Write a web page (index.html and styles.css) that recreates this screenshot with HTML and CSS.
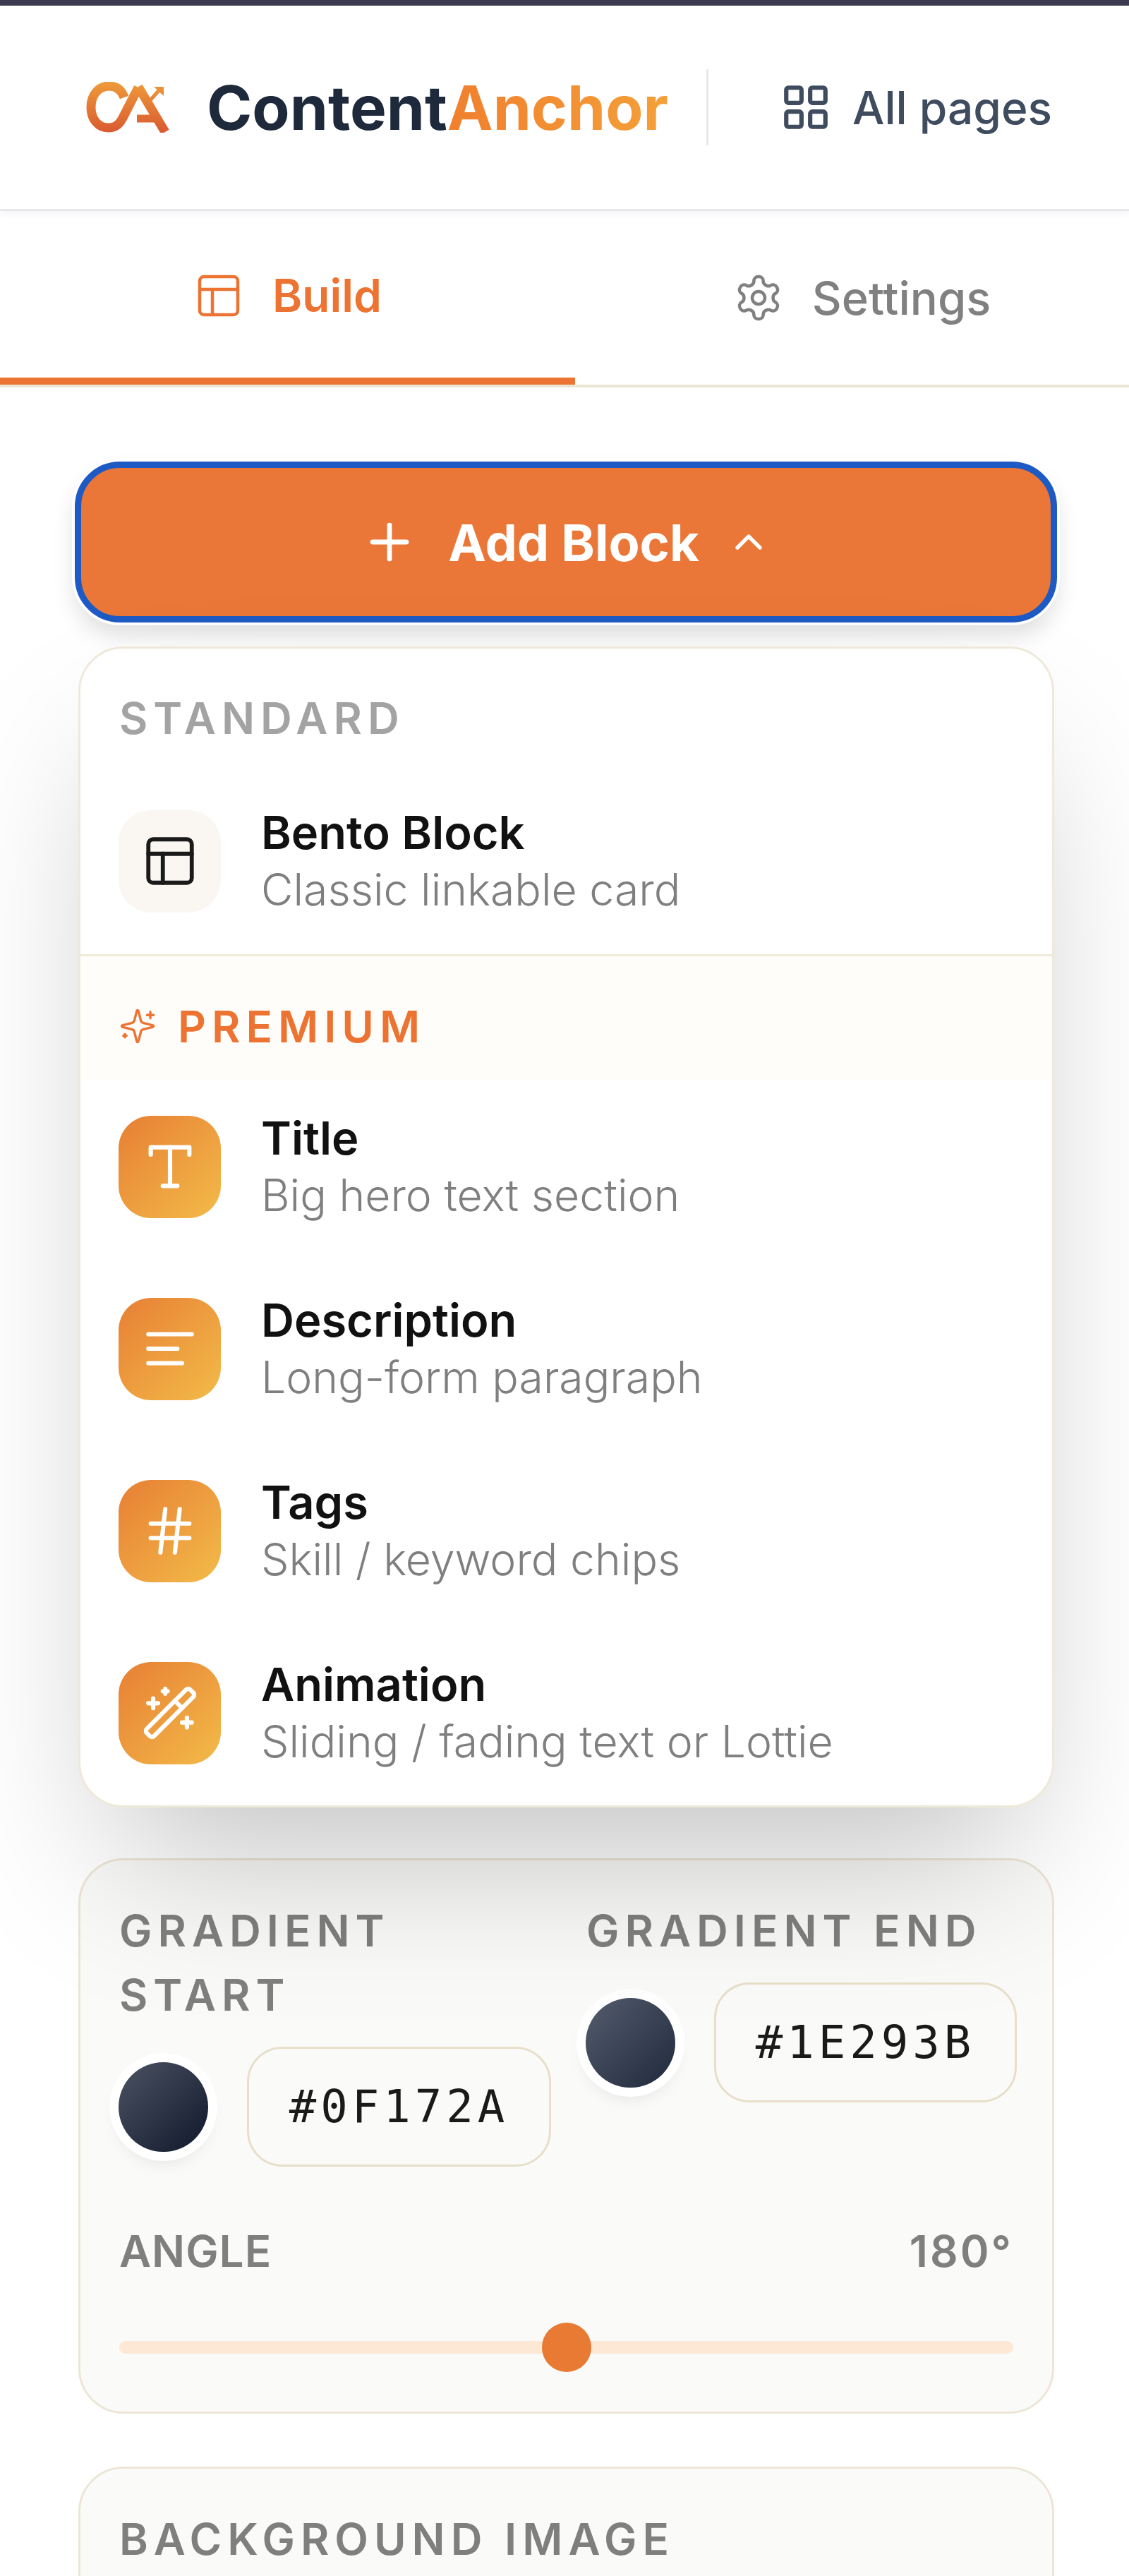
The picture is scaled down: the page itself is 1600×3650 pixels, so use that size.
FILE: index.html

```html
<!DOCTYPE html>
<html lang="en">
<head>
  <meta charset="UTF-8">
  <title>ContentAnchor - Build</title>
  <link rel="stylesheet" href="styles.css">
</head>
<body>
  <div class="topbar"></div>

  <header class="header">
    <svg class="logo" viewBox="0 0 120 72" fill="none">
      <defs>
        <linearGradient id="logoGrad" gradientUnits="userSpaceOnUse" x1="0" y1="0" x2="0" y2="72">
          <stop offset="0" stop-color="#ee9a3a"/>
          <stop offset="1" stop-color="#d95a30"/>
        </linearGradient>
      </defs>
      <path d="M54 22C50 11 43 6 33 6C17 6 7 19 7 36C7 53 17 65 32 65C44 65 49 57 53 49L74 8" stroke="url(#logoGrad)" stroke-width="13"/>
      <path d="M74 7L112 71" stroke="url(#logoGrad)" stroke-width="13"/>
      <path d="M72 52H104" stroke="url(#logoGrad)" stroke-width="11"/>
      <path d="M90 27L106 9" stroke="url(#logoGrad)" stroke-width="5"/>
      <path d="M96 7H110V20Z" fill="url(#logoGrad)"/>
    </svg>
    <div class="brand"><span class="brand-dark">Content</span><span class="brand-light">Anchor</span></div>
    <div class="header-divider"></div>
    <a class="all-pages">
      <svg class="icon all-pages-icon" viewBox="0 0 24 24">
        <rect x="3" y="3" width="7" height="7" rx="1"/><rect x="14" y="3" width="7" height="7" rx="1"/>
        <rect x="14" y="14" width="7" height="7" rx="1"/><rect x="3" y="14" width="7" height="7" rx="1"/>
      </svg>
      All pages
    </a>
  </header>

  <nav class="tabs">
    <a class="tab tab-active">
      <svg class="icon tab-icon" viewBox="0 0 24 24"><rect x="3" y="3" width="18" height="18" rx="2"/><path d="M3 9h18"/><path d="M9 21V9"/></svg>
      Build
    </a>
    <a class="tab tab-settings">
      <svg class="icon tab-icon" viewBox="0 0 24 24"><path d="M12.22 2h-.44a2 2 0 0 0-2 2v.18a2 2 0 0 1-1 1.73l-.43.25a2 2 0 0 1-2 0l-.15-.08a2 2 0 0 0-2.73.73l-.22.38a2 2 0 0 0 .73 2.73l.15.1a2 2 0 0 1 1 1.72v.51a2 2 0 0 1-1 1.74l-.15.09a2 2 0 0 0-.73 2.73l.22.38a2 2 0 0 0 2.73.73l.15-.08a2 2 0 0 1 2 0l.43.25a2 2 0 0 1 1 1.73V20a2 2 0 0 0 2 2h.44a2 2 0 0 0 2-2v-.18a2 2 0 0 1 1-1.73l.43-.25a2 2 0 0 1 2 0l.15.08a2 2 0 0 0 2.73-.73l.22-.39a2 2 0 0 0-.73-2.73l-.15-.08a2 2 0 0 1-1-1.74v-.5a2 2 0 0 1 1-1.74l.15-.09a2 2 0 0 0 .73-2.73l-.22-.38a2 2 0 0 0-2.73-.73l-.15.08a2 2 0 0 1-2 0l-.43-.25a2 2 0 0 1-1-1.73V4a2 2 0 0 0-2-2z"/><circle cx="12" cy="12" r="3"/></svg>
      Settings
    </a>
  </nav>

  <main class="content">
    <button class="add-block">
      <svg class="icon add-icon" viewBox="0 0 24 24"><path d="M5 12h14"/><path d="M12 5v14"/></svg>
      <span>Add Block</span>
      <svg class="icon chevron-icon" viewBox="0 0 24 24"><path d="m18 15-6-6-6 6"/></svg>
    </button>

    <div class="menu">
      <div class="menu-standard">
        <div class="menu-label">STANDARD</div>
        <div class="menu-row">
          <div class="row-icon row-icon-plain">
            <svg class="icon" viewBox="0 0 24 24"><rect x="3" y="3" width="18" height="18" rx="2"/><path d="M3 9h18"/><path d="M9 21V9"/></svg>
          </div>
          <div>
            <div class="row-title">Bento Block</div>
            <div class="row-sub">Classic linkable card</div>
          </div>
        </div>
      </div>

      <div class="menu-premium">
        <svg class="icon sparkle-icon" viewBox="0 0 24 24"><path d="M9.937 15.5A2 2 0 0 0 8.5 14.063l-6.135-1.582a.5.5 0 0 1 0-.962L8.5 9.936A2 2 0 0 0 9.937 8.5l1.582-6.135a.5.5 0 0 1 .963 0L14.063 8.5A2 2 0 0 0 15.5 9.937l6.135 1.581a.5.5 0 0 1 0 .964L15.5 14.063a2 2 0 0 0-1.437 1.437l-1.582 6.135a.5.5 0 0 1-.963 0z"/><path d="M20 3v4"/><path d="M22 5h-4"/><path d="M4 17v2"/><path d="M5 18H3"/></svg>
        <span>PREMIUM</span>
      </div>

      <div class="menu-list">
        <div class="menu-row">
          <div class="row-icon row-icon-premium">
            <svg class="icon" viewBox="0 0 24 24"><path d="M4 7V4h16v3"/><path d="M9 20h6"/><path d="M12 4v16"/></svg>
          </div>
          <div>
            <div class="row-title">Title</div>
            <div class="row-sub">Big hero text section</div>
          </div>
        </div>
        <div class="menu-row">
          <div class="row-icon row-icon-premium">
            <svg class="icon" viewBox="0 0 24 24"><path d="M21 6H3"/><path d="M15 12H3"/><path d="M17 18H3"/></svg>
          </div>
          <div>
            <div class="row-title">Description</div>
            <div class="row-sub">Long-form paragraph</div>
          </div>
        </div>
        <div class="menu-row">
          <div class="row-icon row-icon-premium">
            <svg class="icon" viewBox="0 0 24 24"><path d="M4 9h16"/><path d="M4 15h16"/><path d="M10 3 8 21"/><path d="M16 3l-2 18"/></svg>
          </div>
          <div>
            <div class="row-title">Tags</div>
            <div class="row-sub">Skill / keyword chips</div>
          </div>
        </div>
        <div class="menu-row">
          <div class="row-icon row-icon-premium">
            <svg class="icon" viewBox="0 0 24 24"><path d="m21.64 3.64-1.28-1.28a1.21 1.21 0 0 0-1.72 0L2.36 18.64a1.21 1.21 0 0 0 0 1.72l1.28 1.28a1.2 1.2 0 0 0 1.72 0L21.64 5.36a1.2 1.2 0 0 0 0-1.72"/><path d="m14 7 3 3"/><path d="M5 6v4"/><path d="M19 14v4"/><path d="M10 2v2"/><path d="M7 8H3"/><path d="M21 16h-4"/><path d="M11 3H9"/></svg>
          </div>
          <div>
            <div class="row-title">Animation</div>
            <div class="row-sub">Sliding / fading text or Lottie</div>
          </div>
        </div>
      </div>
    </div>

    <section class="card">
      <div class="color-grid">
        <div>
          <div class="field-label">GRADIENT<br>START</div>
          <div class="color-row">
            <div class="swatch swatch-start"></div>
            <div class="hex-input">#0F172A</div>
          </div>
        </div>
        <div>
          <div class="field-label">GRADIENT END</div>
          <div class="color-row">
            <div class="swatch swatch-end"></div>
            <div class="hex-input">#1E293B</div>
          </div>
        </div>
      </div>
      <div class="angle-row">
        <div class="field-label angle-label">ANGLE</div>
        <div class="field-label angle-value">180°</div>
      </div>
      <div class="slider">
        <div class="slider-thumb"></div>
      </div>
    </section>

    <section class="card card-last">
      <div class="field-label">BACKGROUND IMAGE</div>
    </section>
  </main>
</body>
</html>
```

FILE: styles.css

```css
body {
  margin: 0;
  width: 1600px;
  height: 3650px;
  overflow: hidden;
  background: #fff;
  color: #111;
  font-family: Inter, "Liberation Sans", sans-serif;
}

.icon {
  display: block;
  width: 82px;
  height: 82px;
  fill: none;
  stroke: currentColor;
  stroke-width: 1.5;
  stroke-linecap: round;
  stroke-linejoin: round;
}

/* header */
.topbar {
  height: 8px;
  background: #3c3a4e;
}
.header {
  height: 291px;
  box-sizing: border-box;
  display: flex;
  align-items: center;
  padding-left: 122px;
  border-bottom: 3px solid #e7e8ec;
  box-shadow: 0 4px 10px rgba(0, 0, 0, 0.05);
  position: relative;
}
.logo {
  width: 120px;
  height: 72px;
  margin-right: 51px;
}
.brand {
  font-size: 87px;
  font-weight: 700;
}
.brand-dark {
  color: #1e293b;
}
.brand-light {
  background: linear-gradient(90deg, #f07f2e, #f4a038);
  -webkit-background-clip: text;
  background-clip: text;
  color: transparent;
}
.header-divider {
  width: 3px;
  height: 108px;
  margin-left: 54px;
  background: #e5e7eb;
}
.all-pages {
  display: flex;
  align-items: center;
  gap: 29px;
  margin-left: 101px;
  color: #3f4b5e;
  font-size: 64px;
  font-weight: 500;
}
.all-pages-icon {
  width: 74px;
  height: 74px;
  stroke-width: 2;
}

/* tabs */
.tabs {
  height: 250px;
  box-sizing: border-box;
  display: flex;
  border-bottom: 4px solid #ebe5d6;
}
.tab {
  display: flex;
  align-items: center;
  justify-content: center;
  gap: 46px;
  font-size: 65px;
  font-weight: 500;
  color: #808080;
}
.tab-active {
  width: 815px;
  height: 246px;
  box-sizing: border-box;
  padding-top: 3px;
  border-bottom: 10px solid #ec7331;
  color: #ec7331;
  font-size: 64px;
  font-weight: 600;
}
.tab-settings {
  flex: 1;
  padding-left: 28px;
}
.tab-icon {
  width: 72px;
  height: 72px;
  margin-right: -6px;
}

/* add block */
.content {
  padding: 105px 107px 0;
}
.add-block {
  display: flex;
  align-items: center;
  justify-content: center;
  width: 1392px;
  height: 228px;
  margin-left: -1px;
  border: 9px solid #1d5ac4;
  border-radius: 64px;
  background: #ea7738;
  color: #fff;
  font-family: inherit;
  font-size: 72px;
  font-weight: 700;
  box-shadow: 0 0 0 4px #fff, 0 18px 32px rgba(0, 0, 0, 0.13);
}
.add-icon {
  width: 82px;
  height: 82px;
  margin-right: 42px;
  stroke-width: 2;
}
.chevron-icon {
  width: 64px;
  height: 64px;
  margin-left: 38px;
  stroke-width: 2;
}

/* dropdown menu */
.menu {
  width: 1383px;
  box-sizing: border-box;
  margin: 34px 0 0 4px;
  border: 3px solid #efe9da;
  border-radius: 64px;
  background: #fff;
  overflow: hidden;
  box-shadow: 0 114px 228px -55px rgba(0, 0, 0, 0.25);
  position: relative;
}
.menu-standard {
  padding: 63px 54px 52px;
  border-bottom: 3px solid #f0eadc;
}
.menu-label {
  height: 72px;
  line-height: 72px;
  margin-bottom: 86px;
  padding-left: 1px;
  color: #a3a3a3;
  font-size: 62px;
  font-weight: 600;
  letter-spacing: 8px;
}
.menu-premium {
  display: flex;
  align-items: center;
  gap: 30px;
  height: 72px;
  padding: 63px 54px 40px;
  background: #fefdf9;
  color: #ec7331;
  font-size: 62px;
  font-weight: 600;
  letter-spacing: 8px;
}
.sparkle-icon {
  width: 54px;
  height: 54px;
}
.menu-list {
  display: flex;
  flex-direction: column;
  gap: 98px;
  padding: 43px 54px 51px;
}
.menu-row {
  display: flex;
  align-items: center;
  gap: 57px;
}
.row-icon {
  flex: none;
  display: flex;
  align-items: center;
  justify-content: center;
  width: 145px;
  height: 145px;
  border-radius: 46px;
}
.row-icon-plain {
  background: #faf7f3;
  color: #1a1a1a;
}
.row-icon-plain .icon {
  stroke-width: 1.7;
}
.row-icon-premium {
  background: linear-gradient(135deg, #e77f35, #f3bb48);
  color: #fff;
}
.row-icon-premium .icon {
  stroke-width: 1.8;
}
.row-title {
  line-height: 80px;
  font-size: 65px;
  font-weight: 600;
  color: #111;
}
.row-sub {
  line-height: 80px;
  font-size: 62.5px;
  font-weight: 300;
  color: #7f7f7f;
}

/* settings cards */
.card {
  width: 1383px;
  box-sizing: border-box;
  margin: 72px 0 0 4px;
  padding: 54px 55px 56px;
  border: 3px solid #ece6d8;
  border-radius: 64px;
  background: #fafaf8;
}
.card-last {
  margin-top: 75px;
  height: 400px;
}
.field-label {
  line-height: 91px;
  color: #7f7f7d;
  font-size: 62px;
  font-weight: 600;
  letter-spacing: 8px;
}
.color-grid {
  display: grid;
  grid-template-columns: 612px 610px;
  column-gap: 50px;
}
.color-row {
  display: flex;
  align-items: center;
  gap: 55px;
  margin-top: 28px;
}
.swatch {
  flex: none;
  width: 127px;
  height: 127px;
  margin-left: -1px;
  border-radius: 50%;
  box-shadow: 0 0 0 13px #fff, 0 14px 24px rgba(0, 0, 0, 0.1);
}
.swatch-start {
  background: linear-gradient(135deg, #4b5363, #0f172a);
}
.swatch-end {
  background: linear-gradient(135deg, #555d6e, #1e293b);
}
.hex-input {
  flex: 1;
  height: 170px;
  box-sizing: border-box;
  display: flex;
  align-items: center;
  justify-content: center;
  border: 3px solid #e6dfc9;
  border-radius: 50px;
  color: #1a1a1a;
  font-family: "DejaVu Sans Mono", monospace;
  font-size: 64px;
  letter-spacing: 6px;
}
.angle-row {
  display: flex;
  justify-content: space-between;
  margin-top: 74px;
}
.angle-label {
  letter-spacing: 1px;
}
.angle-value {
  letter-spacing: 3px;
}
.slider {
  display: flex;
  justify-content: center;
  align-items: center;
  height: 18px;
  margin: 82px 0 26px;
  border-radius: 9px;
  background: #fce8d5;
}
.slider-thumb {
  width: 70px;
  height: 70px;
  flex: none;
  border-radius: 50%;
  background: #e87a33;
}
```
